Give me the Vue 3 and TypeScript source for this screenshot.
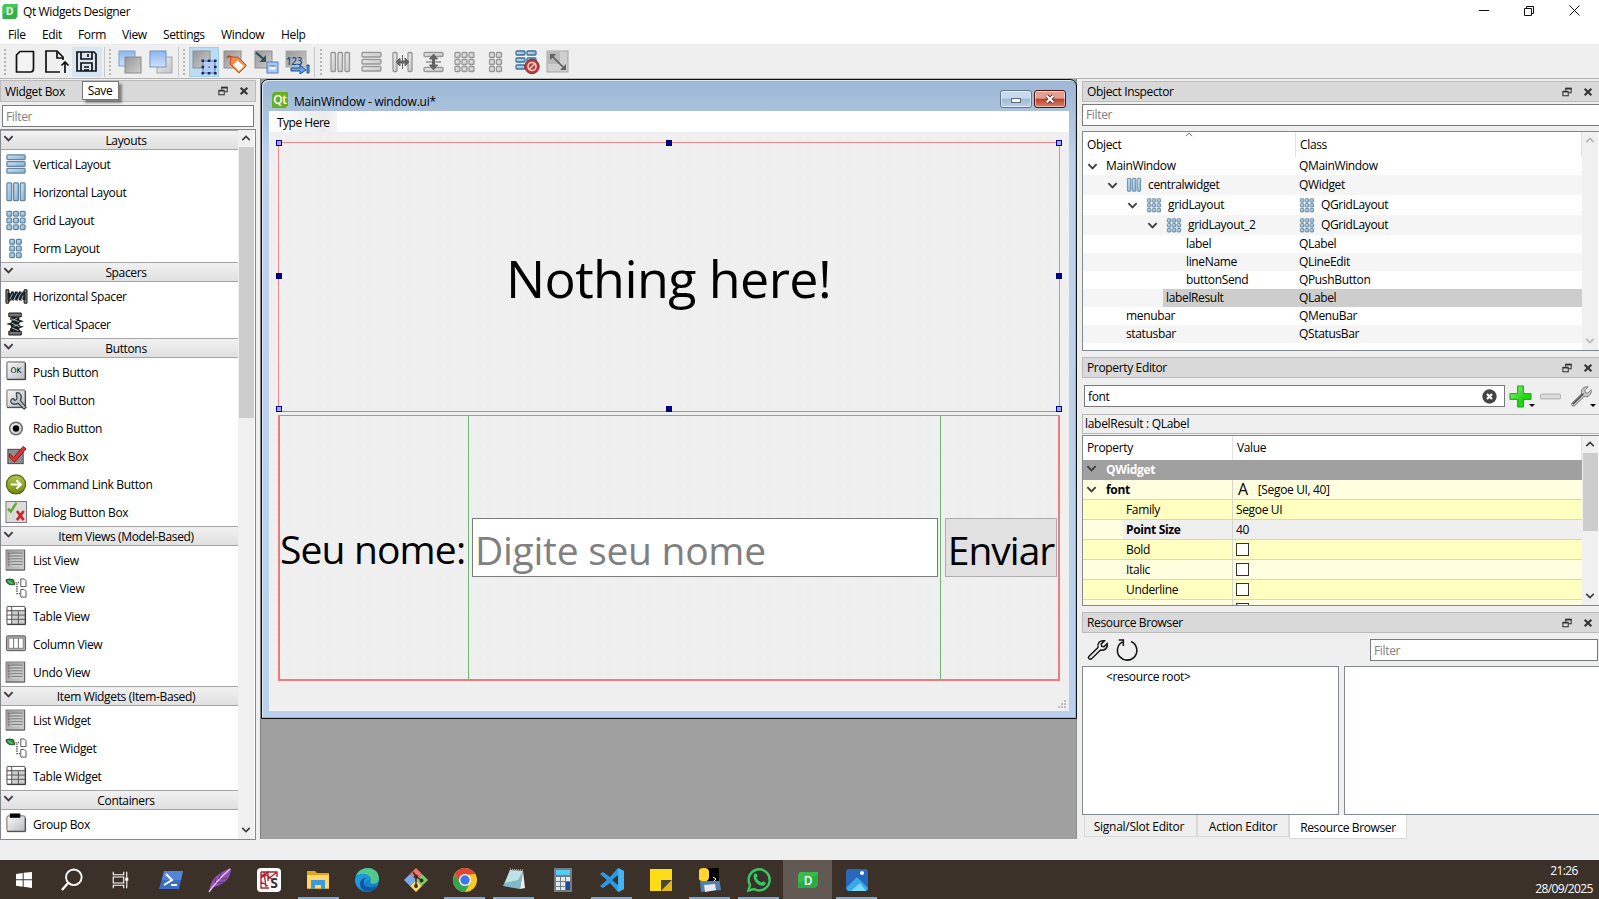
<script setup lang="ts">
interface Tool { icon: string; state?: string }
interface Category { title: string; items: { icon: string; label: string }[] }
interface TreeRow { name: string; cls: string; depth: number; open?: boolean; icon?: string; clsIcon?: string; selected?: boolean }
interface PropRow { name: string; value?: string; check?: boolean; current?: boolean }
interface TaskItem { icon: string; running?: boolean; active?: boolean }

const bar = (x: number, y: number, w: number, h: number, f = 'url(#gBlue)', s = '#64859f') =>
  `<rect x="${x}" y="${y}" width="${w}" height="${h}" rx="1" fill="${f}" stroke="${s}" stroke-width="1.300"/>`
const grey = ['url(#gGrey)', '#979797'] as const
const deep = ['url(#gBlue)', '#3c7099'] as const
const grid = (cols: number, ox: number, f?: string, s?: string) => {
  let out = ''
  for (let r = 0; r < 3; r++) for (let c = 0; c < cols; c++) out += bar(ox + c * 7, 2.5 + r * 7, 5, 5, f, s)
  return out
}
const sheet = '<rect x="1" y="1" width="19.500" height="21" fill="url(#gSteel)" stroke="#8b8b8b"/><path d="M1 22h19.500V1" fill="none" stroke="#5c5c5c"/><path d="M3 4.500h2M3 7.500h2M3 10.500h2M3 13.500h2M3 16.500h2" stroke="#555"/><path d="M7 4.500h11M7 7.500h11M7 10.500h11M7 13.500h11M7 16.500h11" stroke="#666" stroke-width="1"/><path d="M7 5.500h11M7 8.500h11M7 11.500h11M7 14.500h11M7 17.500h11" stroke="#dcdcdc"/>'
const wrench = 'M2 19 12 9.300C11 5 14 1 19 2l-3.500 3.500 .5 2.500 2.500.5L22 5c1 5-3 8-7.300 7L5 21.500C3 23 .5 21 2 19z'
const block = '<rect x="1" y="1" width="17" height="17" fill="url(#gSteel)" stroke="#8f8f8f"/>'

const icons: Record<string, string> = {
  qt: '<path d="M3 0h21v20l-3 4H0V4z" fill="#2fb247"/><path d="M3 0h21v4L0 17V4z" fill="#48c65b"/><text x="11.500" y="18" text-anchor="middle" font-size="17" font-weight="700" fill="#eafbe9" font-family="Open Sans,sans-serif">D</text>',
  qtForm: '<path d="M3 0h21v20l-4 4H0V4z" fill="#6aaf20"/><text x="12" y="18" text-anchor="middle" font-size="18" font-weight="600" fill="#fff" font-family="Open Sans,sans-serif">Qt</text>',
  new: '<path d="M7 1.500h13.500v17q0 3.500-3 3.500H3.500V5z" fill="#fff" fill-opacity=".3" stroke="#111" stroke-width="1.700" stroke-linejoin="round"/>',
  open: '<path d="M16 22H2V1h11l6 6v3M13 1v7h6M21 23V12M17.500 15.500 21 12l3.500 3.500" fill="none" stroke="#111" stroke-width="1.700"/>',
  save: '<path d="M2 2h17l2 2v17H2zM6 2v7h11V2M13 4v3M6 21v-8h11v8M9 17h5M9 20h5" fill="none" stroke="#111" stroke-width="1.700"/>',
  back: '<rect x="1" y="1" width="16" height="15" fill="url(#gSky)" stroke="#7f9fca"/><rect x="7" y="7" width="16" height="16" fill="url(#gSteel)" stroke="#8b8b8b"/>',
  front: '<rect x="8" y="7" width="15" height="16" fill="url(#gGrey)" stroke="#a7a7a7"/><rect x="1" y="1" width="16" height="16" fill="url(#gSky)" stroke="#7291bd"/>',
  widgets: block + '<rect x="11" y="11" width="12" height="12" fill="#b4cdf2" stroke="#4d7fc4"/><path d="M9.500 9.500h2.600v2.600H9.500zM15.700 9.500h2.600v2.600h-2.600zM22 9.500h2.600v2.600H22zM9.500 15.700h2.600v2.600H9.500zM22 15.700h2.600v2.600H22zM9.500 22h2.600v2.600H9.500zM15.700 22h2.600v2.600h-2.600zM22 22h2.600v2.600H22z" fill="#152e57"/><path d="M16.500 16.500h1.200v1.200h-1.200z" fill="#152e57"/>',
  signals: block + '<path d="M4 8Q6 4 11 9" fill="none" stroke="#c8370a" stroke-width="1.600"/><path d="M8 7h7l8.500 8.500L16 23 7 14z" fill="#ef8a4a" stroke="#cc4d12"/><path d="M14.500 10.500l6.500 5.500-5 5-6-6z" fill="#fff"/>',
  buddy: block + '<rect x="13" y="12" width="11" height="11" fill="#a9c8f4" stroke="#4e7fc2"/><path d="M15.500 18h6" stroke="#fff" stroke-width="3"/><path d="M15.500 16h6" stroke="#4472b6"/><path d="M2 2.500l8 7" stroke="#2e4d5f" stroke-width="2.200"/><path d="M12 5v7H5.500z" fill="#2e4d5f"/>',
  tabs: '<rect x="1" y="1" width="20" height="16" fill="url(#gSteel)" stroke="#aaa"/><text x="1" y="14.500" font-size="10" font-weight="600" fill="#174b8d" font-family="Open Sans,sans-serif">123</text><path d="M6 18h9v-3l6 5-6 4v-3H6zM22 15h2v8h-2z" fill="#6da1e0" stroke="#164f96"/>',
  gH: bar(2, 2.500, 4.500, 19, ...grey) + bar(9, 2.500, 4.500, 19, ...grey) + bar(16, 2.500, 4.500, 19, ...grey),
  gV: bar(2, 2.500, 19, 4.500, ...grey) + bar(2, 9.500, 19, 4.500, ...grey) + bar(2, 16.500, 19, 4.500, ...grey),
  gSH: bar(2, 2.500, 4, 19, ...grey) + bar(17, 2.500, 4, 19, ...grey) + '<path d="M5 12l4-4v3h5V8l4 4-4 4v-3H9v3zM11.500 5v14" fill="#646464" stroke="#646464"/>',
  gSV: bar(2, 2.500, 19, 4, ...grey) + bar(2, 17.500, 19, 4, ...grey) + '<path d="M11.500 4l4 5h-3v6h3l-4 5-4-5h3V9h-3zM4 12h15" fill="#646464" stroke="#646464"/>',
  gGrid: grid(3, 2, ...grey),
  gForm: grid(2, 5.500, ...grey),
  break: bar(1, 1, 9, 4, ...deep) + bar(12, 1, 9, 4, ...deep) + bar(1, 8, 9, 4, ...deep) + bar(12, 8, 9, 4, ...deep) + bar(1, 15, 9, 4, ...deep) + '<circle cx="17" cy="16.500" r="7.200" fill="#bd3a36" stroke="#8f2422"/><circle cx="17" cy="16.500" r="4" fill="none" stroke="#ead0cf" stroke-width="1.600"/><path d="M14 19.500l6-6" stroke="#ead0cf" stroke-width="1.600"/>',
  adjust: '<rect x="1" y="1" width="21" height="21" fill="#cfcfcf" stroke="#a5a5a5"/><rect x="2" y="2" width="12" height="12" fill="#b9b9b9"/><path d="M5 5l14 14" fill="none" stroke="#606060" stroke-width="1.700"/><path d="M4 4h6l-6 6zM20 20h-6l6-6z" fill="#606060"/>',
  h: bar(2, 2, 5, 18.500) + bar(9, 2, 5, 18.500) + bar(16, 2, 5, 18.500),
  v: bar(2, 2, 19, 5) + bar(2, 9, 19, 5) + bar(2, 16, 19, 5),
  grid: grid(3, 2),
  form: grid(2, 5),
  hSpacer: '<path d="M1 5h3v14H1zM20 5h3v14h-3z" fill="#888" stroke="#111"/><path d="M4 17L8 7v9l4-9v9l4-9v9l4-9v9M4 8v8" fill="none" stroke="#1b1f22" stroke-width="2.800"/><path d="M5 15l3-6M9 16l3.500-7M13 16l3.500-7M17 16l2-5" stroke="#a8bac0"/>',
  vSpacer: '<path d="M4 0h13v4H4zM4 19h13v4H4z" fill="#777" stroke="#111"/><path d="M7 4h8v15H6z" fill="#1b1f22"/><path d="M5.500 5.500l10 3-10 3 10 3-10 3 10 1.500" fill="none" stroke="#1b1f22" stroke-width="2.500"/><path d="M6.500 6l8 3M7 10.500l8 4M7 15.500l7 3M13 5l-5 3M14 12l-5 2" stroke="#a8bac0"/>',
  push: '<rect x="2" y="1" width="19" height="18" rx="1" fill="url(#gLight)" stroke="#555"/><path d="M2 19.500h19.500V2" fill="none" stroke="#333"/><text x="11.500" y="13" text-anchor="middle" font-size="8" fill="#000" letter-spacing="0" font-family="DejaVu Sans,sans-serif">OK</text>',
  tool: '<rect x="2" y="1" width="19" height="18" rx="1" fill="url(#gLight)" stroke="#666"/><path d="M2 19.500h19.500V2" fill="none" stroke="#444"/><path d="M7 15c-2-2-1-5 2-5l1 2 2-1c2-2-1-4 0-7 3-1 7 3 4 8l6 7-2 2-6-6c-2 1-5 1-7 0z" fill="#c2c7ca" stroke="#3d464b" stroke-width="1.300"/>',
  radio: '<circle cx="11.500" cy="12" r="6.600" fill="url(#gLight)" stroke="#666" stroke-width="1.500"/><circle cx="11.500" cy="12" r="3.300" fill="#000"/>',
  check: '<rect x="3" y="4.500" width="16" height="15" fill="#8d8d8d" stroke="#444"/><path d="M5 9l4 4L19 1.500l3 2.500L10 18l-6-6z" fill="#d93438" stroke="#8c1519"/>',
  command: '<circle cx="11.500" cy="12" r="10" fill="url(#gOlive)" stroke="#4e6207" stroke-width="1.200"/><path d="M6 12h10M12 7.500l4.500 4.500-4.500 4.500" fill="none" stroke="#fff" stroke-width="2.300"/>',
  dialog: '<rect x="1" y=".5" width="21.500" height="22" fill="#dcdcdc" stroke="#777"/><path d="M3 8l3 3 6-9" fill="none" stroke="#66a832" stroke-width="2.500"/><path d="M12.500 10.500l7 9.500M19.500 10.500l-7 9.500" stroke="#cc2630" stroke-width="2.800"/>',
  list: sheet,
  tree: '<path d="M1 3l4-1 4 1 1 5-5 0-3-2z" fill="#2f9139" stroke="#184f1d"/><path d="M3 4l5 3" stroke="#9ed6a2"/><path d="M11 6h5M12.500 7v10M12 17.500h4" stroke="#111" stroke-width="1.200" stroke-dasharray="1.200 1.200" fill="none"/><path d="M16.500 2h3.500l2 2v6h-5.500zM16.500 13h3.500l2 2v6h-5.500z" fill="#fff" stroke="#555"/>',
  table: '<rect x="2" y="1.500" width="19" height="18.500" rx="1" fill="#cfcfcf" stroke="#555"/><path d="M3 2h17v3H3zM3 7h3.500v12H3z" fill="#fff"/><path d="M2 6h19M2 10.500h19M2 15h19M7 2v18M14 6v14" stroke="#555"/><path d="M2 20.500h19.500V3" fill="none" stroke="#333"/>',
  column: '<rect x="1.500" y="3" width="20" height="15.500" rx="1.500" fill="#aaa" stroke="#555"/><path d="M4 5.500h5v10.500H4zM9 5.500h5v10.500H9zM14 5.500h5v10.500h-5z" fill="#fff" stroke="#777" stroke-width=".8"/>',
  group: '<rect x="2" y="3" width="19" height="16" rx="1.500" fill="url(#gLight)" stroke="#666"/><path d="M2 19.500h19.500V5" fill="none" stroke="#444"/><path d="M5 .5h11v4.500H5z" fill="#000"/>',
  plus: '<path d="M9 1h6v8h8v6h-8v8H9v-8H1V9h8z" fill="url(#gGreen)" stroke="#17a010"/>',
  minus: '<rect x="1.500" y="9.500" width="21" height="5" rx="1" fill="#dcdcdc" stroke="#adadad"/>',
  wrench: `<path d="${wrench}" fill="#c7c7c7" stroke="#777"/><path d="M3 20L14 9" stroke="#555" stroke-width="1.700"/>`,
  wrenchLine: `<path d="${wrench}" fill="none" stroke="#151515" stroke-width="1.600"/>`,
  reload: '<path d="M7 3.200A10.600 10.600 0 1 0 16.500 2.800M3 1h5v6.500" fill="none" stroke="#151515" stroke-width="1.700"/>',
  clear: '<circle cx="12" cy="12" r="11.500" fill="#444"/><path d="M8 8l8 8M16 8l-8 8" stroke="#fff" stroke-width="3.500"/>',
  chevron: '<path d="M3 7l9 9 9-9" fill="none" stroke="#3c3c3c" stroke-width="4"/>',
  float: '<path d="M9 9V3h13v11h-6" fill="none" stroke="#333" stroke-width="2.500"/><path d="M8 4h15" stroke="#333" stroke-width="4"/><rect x="2" y="11" width="13" height="10" fill="none" stroke="#333" stroke-width="2.500"/><path d="M2 11h13" stroke="#333" stroke-width="4"/>',
  close: '<path d="M4 4l16 16M20 4L4 20" stroke="#333" stroke-width="5"/>',
  windows: '<path d="M0 3l10-1.500V11H0zM11.500 1.300L24 0v11H11.500zM0 12.500h10V22L0 20.500zM11.500 12.500H24V24l-12.500-1.700z" fill="#fff"/>',
  search: '<circle cx="14" cy="9" r="8.500" fill="none" stroke="#fff" stroke-width="2"/><path d="M8 15L1 23" stroke="#fff" stroke-width="2.500"/>',
  task: '<path d="M3 1v4h14V1M3 23v-4h14v4M3 8h14v8H3zM21 1v22" fill="none" stroke="#fff" stroke-width="1.500"/><path d="M19 9h4v4h-4z" fill="#fff"/>',
  powershell: '<path d="M5 3h19l-4 18H0z" fill="#3c6dc5"/><path d="M5 3h19l-2 9H3z" fill="#5485d8"/><path d="M7 6l6 6-8 5M12 17h6" fill="none" stroke="#fff" stroke-width="2"/>',
  feather: '<path d="M1 24C2 11 10 5 23 0c0 9-5 16-17 19z" fill="#8f52b2"/><path d="M1 24C7 15 13 9 22 1" stroke="#e2bdf2" stroke-width="1.500" fill="none"/><path d="M7 15l1-5M11 11l2-6M9 15l7-1M13 11l6-1" stroke="#64328c"/>',
  red: '<rect width="24" height="24" rx="4" fill="#fff"/><path d="M4 4h16v5M4 4v16h8M4 10l7-6v9M4 14l7 4M11 11l8-6M4 7h5l6 4M7 4l2 15" fill="none" stroke="#b02331" stroke-width="1.400"/><text x="17" y="20" text-anchor="middle" font-size="14" font-weight="700" fill="#333" font-family="Open Sans,sans-serif">S</text>',
  folder: '<path d="M1 3h8l2 2h12v16H1z" fill="#e0a322"/><path d="M1 7h22v13H1z" fill="#ffd866"/><path d="M5 12h14v9h-4v-4H9v4H5z" fill="#3d9bdc"/>',
  edge: '<circle cx="12" cy="12" r="12" fill="#1683cf"/><path d="M1 8C5-3 23-3 24 10c0 5-5 7-9 5 4-7-6-12-14-7z" fill="#52c98a"/><path d="M0 12C3 4 14 5 15 12c-5-2-8 5-1 9-6 3-13-1-14-9z" fill="#1b9ce0"/><path d="M9 13c-1 6 6 8 13 5-4 8-17 7-17-2 0-4 4-7 8-6-2 0-4 1-4 3z" fill="#1456a2"/>',
  git: '<path d="M12 0l6 6-6 6-6-6z" fill="#ee746d"/><path d="M6 6l6 6-6 6-6-6z" fill="#79aaf1"/><path d="M18 6l6 6-6 6-6-6z" fill="#79cc68"/><path d="M12 12l6 6-6 6-6-6z" fill="#f5da74"/><path d="M9 4l3 4v10M12 8l6 5" stroke="#3b3027" stroke-width="1.500" fill="none"/><circle cx="12" cy="18" r="1.900" fill="#33291f"/><circle cx="12" cy="8.500" r="1.900" fill="#33291f"/><circle cx="17.500" cy="12.500" r="1.900" fill="#33291f"/>',
  chrome: '<circle cx="12" cy="12" r="12" fill="#f9c825"/><path d="M1.600 6A12 12 0 0 1 22.400 6L12 7 7 14.500z" fill="#e24437"/><path d="M1.600 6A12 12 0 0 0 12 24l5-9-5 2-5-2.500z" fill="#36a352"/><circle cx="12" cy="12" r="6" fill="#fff"/><circle cx="12" cy="12" r="4.700" fill="#3978e6"/>',
  notepad: '<path d="M8 2l13 1-3 18-17-3z" fill="#7fbac6"/><path d="M8 2l13 1-5 9L3 15z" fill="#bfe2e6"/><path d="M21 3l2 17-5 1z" fill="#eee"/><path d="M8 1.500l13 1" stroke="#aaa" stroke-width="2" stroke-dasharray="1 1"/>',
  calc: '<rect x="3" width="18" height="24" fill="#737c85"/><path d="M5 2h14v5H5z" fill="#55cdf2"/><path d="M5 9h4v4H5zM10 9h4v4h-4zM15 9h4v4h-4zM5 14h4v4H5zM10 14h4v4h-4zM5 19h4v3H5zM10 19h4v3h-4z" fill="#e5e8eb"/><path d="M15 14h4v8h-4z" fill="#174d91"/>',
  code: '<path d="M18 0l6 3v18l-6 3-8-9-7 5-3-2 7-6-7-6 3-2 7 5zM18 7l-6 5 6 5z" fill="#2b9ae5" fill-rule="evenodd"/><path d="M18 0l6 3v18l-6 3z" fill="#45b4f5"/>',
  note: '<path d="M1 1h22v11L12 23H1z" fill="#ffdd16"/><path d="M12 12h11L12 23z" fill="#4b4737"/><path d="M23 12v11H12z" fill="#e6b71d"/>',
  python: '<path d="M2 13l19-3 2 12-20 2z" fill="#507fb0"/><path d="M6 17l11-1 1 6-11 2z" fill="#e8e8e8"/><path d="M9 0h12v13H9z" fill="#000"/><path d="M15 9l3 2-2 2" fill="none" stroke="#fff"/><path d="M1 3q0-3 5-3t5 4v5q0 5-6 4Q0 13 1 9z" fill="#ffd52f"/>',
  whatsapp: '<path d="M1.500 22.500L3 17A10.500 10.500 0 1 1 7 21z" fill="#3b3027" stroke="#35c965" stroke-width="2.400"/><path d="M7 6c2-2 3 0 3.500 2 .5 1-1 1-1 2 1 2 3 4 5 4.500 1 0 1-1.500 2-1s3 1 2 2.500c-2 3-5 1.500-7 .5-3-2-6-6-4.500-10.500z" fill="#35c965"/>',
  designer: '<path d="M4 4h18v13l-3 3H2V7z" fill="#28ad42"/><path d="M4 4h18v3L2 15V7z" fill="#38ba4c"/><text x="12" y="16.500" text-anchor="middle" font-size="12" font-weight="600" fill="#fff" font-family="Open Sans,sans-serif">D</text>',
  photos: '<rect x="1" y="1" width="22" height="22" rx="3" fill="#2767bd"/><path d="M1 20L12 9l11 11v1l-2 2H3z" fill="#38a9e6"/><path d="M6 23l9-8 6 8z" fill="#7bd7f7"/><circle cx="17" cy="5" r="2" fill="#fff"/>'
}

const menus = ['File', 'Edit', 'Form', 'View', 'Settings', 'Window', 'Help']
const toolGroups: Tool[][] = [
  [{ icon: 'new' }, { icon: 'open' }, { icon: 'save', state: 'hover' }],
  [{ icon: 'back' }, { icon: 'front' }],
  [{ icon: 'widgets', state: 'checked' }, { icon: 'signals' }, { icon: 'buddy' }, { icon: 'tabs' }],
  ['gH', 'gV', 'gSH', 'gSV', 'gGrid', 'gForm', 'break', 'adjust'].map(icon => ({ icon }))
]
const categories: Category[] = [
  { title: 'Layouts', items: [{ icon: 'v', label: 'Vertical Layout' }, { icon: 'h', label: 'Horizontal Layout' }, { icon: 'grid', label: 'Grid Layout' }, { icon: 'form', label: 'Form Layout' }] },
  { title: 'Spacers', items: [{ icon: 'hSpacer', label: 'Horizontal Spacer' }, { icon: 'vSpacer', label: 'Vertical Spacer' }] },
  { title: 'Buttons', items: [{ icon: 'push', label: 'Push Button' }, { icon: 'tool', label: 'Tool Button' }, { icon: 'radio', label: 'Radio Button' }, { icon: 'check', label: 'Check Box' }, { icon: 'command', label: 'Command Link Button' }, { icon: 'dialog', label: 'Dialog Button Box' }] },
  { title: 'Item Views (Model-Based)', items: [{ icon: 'list', label: 'List View' }, { icon: 'tree', label: 'Tree View' }, { icon: 'table', label: 'Table View' }, { icon: 'column', label: 'Column View' }, { icon: 'list', label: 'Undo View' }] },
  { title: 'Item Widgets (Item-Based)', items: [{ icon: 'list', label: 'List Widget' }, { icon: 'tree', label: 'Tree Widget' }, { icon: 'table', label: 'Table Widget' }] },
  { title: 'Containers', items: [{ icon: 'group', label: 'Group Box' }] }
]
const objects: TreeRow[] = [
  { name: 'MainWindow', cls: 'QMainWindow', depth: 0, open: true },
  { name: 'centralwidget', cls: 'QWidget', depth: 1, open: true, icon: 'h' },
  { name: 'gridLayout', cls: 'QGridLayout', depth: 2, open: true, icon: 'grid', clsIcon: 'grid' },
  { name: 'gridLayout_2', cls: 'QGridLayout', depth: 3, open: true, icon: 'grid', clsIcon: 'grid' },
  { name: 'label', cls: 'QLabel', depth: 4 },
  { name: 'lineName', cls: 'QLineEdit', depth: 4 },
  { name: 'buttonSend', cls: 'QPushButton', depth: 4 },
  { name: 'labelResult', cls: 'QLabel', depth: 3, selected: true },
  { name: 'menubar', cls: 'QMenuBar', depth: 1 },
  { name: 'statusbar', cls: 'QStatusBar', depth: 1 }
]
const props: PropRow[] = [
  { name: 'Family', value: 'Segoe UI' },
  { name: 'Point Size', value: '40', current: true },
  { name: 'Bold', check: true },
  { name: 'Italic', check: true },
  { name: 'Underline', check: true },
  { name: '', check: true }
]
const tasks: TaskItem[] = [
  { icon: 'windows' }, { icon: 'search' }, { icon: 'task' }, { icon: 'powershell' }, { icon: 'feather' }, { icon: 'red' },
  { icon: 'folder', running: true }, { icon: 'edge' }, { icon: 'git' }, { icon: 'chrome', running: true }, { icon: 'notepad', running: true },
  { icon: 'calc' }, { icon: 'code', running: true }, { icon: 'note' }, { icon: 'python', running: true }, { icon: 'whatsapp', running: true },
  { icon: 'designer', active: true }, { icon: 'photos', running: true }
]
const handles = ['nw', 'n', 'ne', 'w', 'e', 'sw', 's', 'se']
</script>

<template>
  <div class="screen">
    <svg class="defs" width="0" height="0">
      <defs>
        <linearGradient id="gBlue" x1="0" y1="0" x2="1" y2="1"><stop offset="0" stop-color="#d0e7f7" /><stop offset="1" stop-color="#7fadd1" /></linearGradient>
        <linearGradient id="gGrey" x1="0" y1="0" x2="1" y2="1"><stop offset="0" stop-color="#f0f0f0" /><stop offset="1" stop-color="#c4c4c4" /></linearGradient>
        <linearGradient id="gLight" x1="0" y1="0" x2="1" y2="1"><stop offset="0" stop-color="#fafafa" /><stop offset="1" stop-color="#b9bcc0" /></linearGradient>
        <linearGradient id="gSteel" x1="0" y1="0" x2="1" y2="1"><stop offset="0" stop-color="#969696" /><stop offset="1" stop-color="#cfcfcf" /></linearGradient>
        <linearGradient id="gSky" x1="0" y1="0" x2="0" y2="1"><stop offset="0" stop-color="#8db5f0" /><stop offset="1" stop-color="#cfe1fb" /></linearGradient>
        <linearGradient id="gOlive" x1="0" y1="0" x2="0" y2="1"><stop offset="0" stop-color="#b3c653" /><stop offset="1" stop-color="#6d8a0a" /></linearGradient>
        <linearGradient id="gGreen" x1="0" y1="0" x2="1" y2="1"><stop offset="0" stop-color="#9df295" /><stop offset=".6" stop-color="#1fd80e" /></linearGradient>
      </defs>
    </svg>

    <header class="titlebar">
      <svg class="app-icon" viewBox="0 0 24 24" v-html="icons.qt" />
      <span class="app-name">Qt Widgets Designer</span>
      <svg class="win-controls" viewBox="0 0 120 24">
        <path d="M5 10.500h10M50.500 8.500h7v7h-7zM52.500 8.500v-2h7v7h-2M95.500 5.500l10 10M105.500 5.500l-10 10" fill="none" stroke="#111" />
      </svg>
    </header>
    <nav class="menubar"><span v-for="m in menus" :key="m" :class="'m-' + m.toLowerCase()">{{ m }}</span></nav>

    <div class="toolbar">
      <div v-for="(group, gi) in toolGroups" :key="gi" :class="['tool-group', 'g' + gi]">
        <i class="grip" />
        <span v-for="t in group" :key="t.icon" :class="['tool', t.state]"><svg viewBox="0 0 25 25" v-html="icons[t.icon]" /></span>
      </div>
    </div>
    <div class="tooltip">Save</div>

    <main class="workspace">
      <aside class="widget-box">
        <div class="dock-title"><span>Widget Box</span><svg viewBox="0 0 24 24" v-html="icons.float" /><svg viewBox="0 0 24 24" v-html="icons.close" /></div>
        <div class="field wb-filter">Filter</div>
        <div class="wb-list">
          <div class="wb-content">
            <section v-for="c in categories" :key="c.title">
              <h3><svg viewBox="0 0 24 24" v-html="icons.chevron" /><span>{{ c.title }}</span></h3>
              <div v-for="it in c.items" :key="it.label" class="wb-item"><svg viewBox="0 0 23 23" v-html="icons[it.icon]" /><span>{{ it.label }}</span></div>
            </section>
          </div>
          <div class="scroll">
            <svg class="up" viewBox="0 0 24 24" v-html="icons.chevron" /><i class="thumb wb-thumb" /><svg class="down" viewBox="0 0 24 24" v-html="icons.chevron" />
          </div>
        </div>
      </aside>

      <div class="mdi">
        <div class="subwindow">
          <div class="sub-title">
            <svg class="sub-icon" viewBox="0 0 24 24" v-html="icons.qtForm" />
            <span>MainWindow - window.ui*</span>
            <div class="sub-btn"><i class="min-glyph" /></div>
            <div class="sub-btn red"><svg viewBox="0 0 14 12"><path d="M3 2l8 8M11 2l-8 8" stroke="#5a2a2a" stroke-width="4.500" /><path d="M3 2l8 8M11 2l-8 8" stroke="#fff" stroke-width="2.600" /></svg></div>
          </div>
          <div class="form">
            <div class="form-menu"><span>Type Here</span></div>
            <div class="central">
              <div class="result">
                <span>Nothing here!</span>
                <i v-for="h in handles" :key="h" :class="['handle', h]" />
              </div>
              <div class="grid-row">
                <div class="cell name-label"><span>Seu nome:</span></div>
                <div class="cell name-edit"><div class="line-edit"><span>Digite seu nome</span></div></div>
                <div class="cell send"><div class="push"><span>Enviar</span></div></div>
              </div>
            </div>
            <svg class="size-grip" viewBox="0 0 9 9"><path d="M6 0h2v2H6zM3 3h2v2H3zM6 3h2v2H6zM0 6h2v2H0zM3 6h2v2H3zM6 6h2v2H6z" fill="#bdbdbd" /></svg>
          </div>
        </div>
      </div>

      <aside class="right">
        <section class="inspector">
          <div class="dock-title"><span>Object Inspector</span><svg viewBox="0 0 24 24" v-html="icons.float" /><svg viewBox="0 0 24 24" v-html="icons.close" /></div>
          <div class="field oi-filter">Filter</div>
          <div class="table oi-table">
            <div class="table-body">
              <div class="head"><span class="c1">Object<svg class="sort" viewBox="0 0 10 6"><path d="M1 5l4-4 4 4" fill="none" stroke="#555" /></svg></span><span class="c2">Class</span></div>
              <div v-for="(o, i) in objects" :key="o.name" :class="['orow', { alt: i % 2, tall: o.icon, selected: o.selected }]">
                <div :class="['c1', 'd' + o.depth]">
                  <svg v-if="o.open" class="chev" viewBox="0 0 24 24" v-html="icons.chevron" />
                  <svg v-if="o.icon" class="mini" viewBox="0 0 23 23" v-html="icons[o.icon]" />
                  <span class="oname">{{ o.name }}</span>
                </div>
                <div class="c2"><svg v-if="o.clsIcon" class="mini" viewBox="0 0 23 23" v-html="icons[o.clsIcon]" /><span>{{ o.cls }}</span></div>
              </div>
            </div>
            <div class="scroll faint"><svg class="up" viewBox="0 0 24 24" v-html="icons.chevron" /><svg class="down" viewBox="0 0 24 24" v-html="icons.chevron" /></div>
          </div>
        </section>

        <section class="props">
          <div class="dock-title"><span>Property Editor</span><svg viewBox="0 0 24 24" v-html="icons.float" /><svg viewBox="0 0 24 24" v-html="icons.close" /></div>
          <div class="prop-tools">
            <div class="field"><span>font</span><svg viewBox="0 0 24 24" v-html="icons.clear" /></div>
            <svg class="pt" viewBox="0 0 24 24" v-html="icons.plus" /><i class="arrow" />
            <svg class="pt" viewBox="0 0 24 24" v-html="icons.minus" />
            <svg class="pt" viewBox="0 0 24 24" v-html="icons.wrench" /><i class="arrow" />
          </div>
          <div class="prop-object">labelResult : QLabel</div>
          <div class="table p-table">
            <div class="table-body">
              <div class="head"><span class="c1">Property</span><span class="c2">Value</span></div>
              <div class="prow group"><svg class="chev" viewBox="0 0 24 24" v-html="icons.chevron" /><b>QWidget</b></div>
              <div class="prow font-row"><div class="c1"><svg class="chev" viewBox="0 0 24 24" v-html="icons.chevron" /><b>font</b></div><div class="c2"><span class="a">A</span><span>[Segoe UI, 40]</span></div></div>
              <div v-for="(p, i) in props" :key="i" :class="['prow', { dark: i % 2 === 0, current: p.current }]">
                <div class="c1"><span>{{ p.name }}</span></div>
                <div class="c2"><i v-if="p.check" class="box" /><span v-else>{{ p.value }}</span></div>
              </div>
            </div>
            <div class="scroll"><svg class="up" viewBox="0 0 24 24" v-html="icons.chevron" /><i class="thumb p-thumb" /><svg class="down" viewBox="0 0 24 24" v-html="icons.chevron" /></div>
          </div>
        </section>

        <section class="resources">
          <div class="dock-title"><span>Resource Browser</span><svg viewBox="0 0 24 24" v-html="icons.float" /><svg viewBox="0 0 24 24" v-html="icons.close" /></div>
          <div class="res-tools"><svg viewBox="0 0 24 24" v-html="icons.wrenchLine" /><svg viewBox="0 0 24 24" v-html="icons.reload" /><div class="field">Filter</div></div>
          <div class="res-panes"><div class="pane left">&lt;resource root&gt;</div><div class="pane" /></div>
          <div class="tabs"><span class="t1">Signal/Slot Editor</span><span class="t2">Action Editor</span><span class="t3">Resource Browser</span></div>
        </section>
      </aside>
    </main>

    <footer class="taskbar">
      <div v-for="t in tasks" :key="t.icon" :class="['slot', 's-' + t.icon, { running: t.running, active: t.active }]"><svg viewBox="0 0 24 24" v-html="icons[t.icon]" /></div>
      <div class="clock"><span>21:26</span><span>28/09/2025</span></div>
    </footer>
  </div>
</template>

<style>
body { margin: 0; overflow: hidden; }
</style>

<style scoped>
* { box-sizing: border-box; }
.screen { position: relative; width: 1599px; height: 899px; display: flex; flex-direction: column; overflow: hidden; background: #efefef; font: 12px "Open Sans", "Noto Sans", sans-serif; letter-spacing: -.35px; color: #000; white-space: nowrap; }
svg { display: block; flex: none; overflow: visible; }
i { display: block; }
.defs { position: absolute; }
.titlebar { height: 24px; background: #fff; display: flex; align-items: center; padding-left: 2px; }
.app-icon { width: 16px; height: 15px; margin-top: -2px; }
.app-name { margin: -1px 0 0 5px; flex: 1; letter-spacing: -.37px; }
.win-controls { width: 120px; height: 24px; margin-right: 5px; }
.menubar { height: 21px; background: #fff; border-bottom: 1px solid #ececec; display: flex; padding-left: 8px; line-height: 21px; }
.m-file { width: 34px; } .m-edit { width: 36px; } .m-form { width: 44px; } .m-view { width: 41px; } .m-settings { width: 58px; } .m-window { width: 60px; }
.toolbar { height: 34px; display: flex; padding-top: 2px; border-bottom: 1px solid #b4b4b4; }
.tool-group { display: flex; height: 30px; border-right: 1px solid #c6c6c6; }
.g0 { width: 105px; } .g1 { width: 74px; } .g2 { width: 136px; } .g3 { border: 0; padding-left: 1px; }
.grip { width: 3px; height: 26px; margin: 2px 3px 0 4px; background: radial-gradient(circle at 1px 1px, #b5b5b5 1px, transparent 1.3px) 0 0 / 3px 4px; }
.tool { width: 30px; height: 30px; margin-right: 1px; display: grid; place-items: center; padding: 1px 0 0 1px; }
.tool svg { width: 25px; height: 25px; }
.tool.hover { background: #d8e6f2; }
.tool.checked { background: #bcdcf4; box-shadow: inset 0 0 0 1px #a5cdec; }
.tooltip { position: absolute; left: 82px; top: 81px; width: 37px; height: 19px; line-height: 18px; padding-right: 1px; text-align: center; background: #fff; border: 1px solid #767676; box-shadow: 3px 3px 2px rgba(0,0,0,.4); z-index: 5; }
.workspace { flex: 1; display: flex; }
.dock-title { height: 21px; border: 1px solid #bbb; background: #d9d9d9; display: flex; align-items: center; padding: 0 6px 0 4px; }
.dock-title span { flex: 1; }
.dock-title svg { width: 10px; height: 10px; margin-left: 11px; }
.field { height: 22px; border: 1px solid #7a7a7a; background: #fff; color: #808080; line-height: 21px; padding-left: 3px; }
.widget-box { width: 256px; padding-top: 2px; }
.widget-box .dock-title { margin-top: -1px; height: 22px; }
.wb-filter { margin: 3px 2px 0; line-height: 22px; }
.wb-list { margin-top: 2px; height: 711px; border: 1px solid #828790; background: #fff; display: flex; }
.wb-content { width: 237px; }
h3 { margin: 0; height: 20px; border: solid #a5a5a5; border-width: 1px 0; background: linear-gradient(#f1f1f1, #e0e0e0); font: inherit; display: flex; padding-left: 2px; }
h3 svg { width: 11px; height: 11px; margin-top: 2px; }
h3 span { flex: 1; text-align: center; line-height: 19px; }
.wb-item { height: 28px; display: flex; align-items: center; padding-left: 4px; }
.wb-item svg { width: 22px; height: 22px; }
.wb-item span { margin-left: 6px; line-height: 28px; padding-top: 1px; letter-spacing: -.33px; }
.scroll { width: 16px; background: #f0f0f0; display: flex; flex-direction: column; align-items: center; }
.scroll svg { width: 10px; height: 10px; }
.up { transform: rotate(180deg); margin: 3px 0 4px; }
.down { margin: auto 0 4px; }
.thumb { width: 15px; background: #cdcdcd; }
.wb-thumb { height: 271px; }
.faint svg { opacity: .3; }
.mdi { width: 817px; margin-left: 4px; height: 760px; background: #a0a0a0; border-left: 1px solid #838383; border-right: 1px solid #8c8c8c; }
.subwindow { width: 816px; height: 640px; border: 1px solid #111; border-radius: 7px 7px 0 0; padding: 0 7px 7px; background: linear-gradient(#9db7d5, #bdd3ea 80px, #b9d1ea); box-shadow: inset -1px -1px #56cfe8, inset 1px 1px #dce9f6; }
.sub-title { height: 31px; display: flex; align-items: center; padding: 7px 0 0 3px; }
.sub-icon { width: 16px; height: 16px; margin-top: 1px; }
.sub-title span { margin: 5px 0 0 6px; flex: 1; letter-spacing: -.22px; }
.sub-btn { width: 32px; height: 18px; margin: -1px 2px 0 0; border: 1px solid #62788f; border-radius: 3px; background: linear-gradient(#c8daee 45%, #9db9d8 50%, #bdd3ea); display: grid; place-items: center; box-shadow: inset 0 0 0 1px #ffffff80; }
.sub-btn.red { border-color: #4d1613; background: linear-gradient(#e3a091 45%, #be402a 50%, #d4836c); margin-right: 3px; }
.red svg { width: 12px; height: 10px; }
.min-glyph { width: 10px; height: 5px; background: #fff; border: 1px solid #5b6878; margin-top: 3px; }
.form { position: relative; height: 600px; background: #efefef; }
.form-menu { height: 21px; background: #fff; }
.form-menu span { display: block; width: 68px; height: 21px; line-height: 23px; padding-left: 8px; background: linear-gradient(90deg, #fff, #ebebeb 80%, #f4f4f4); letter-spacing: -.5px; }
.central { padding: 10px 9px 0; background: radial-gradient(circle, #f3f3f3 .8px, transparent 1px) 0 0 / 10px 10px; }
.result { position: relative; height: 270px; border: 1px solid #ec8a8a; border-bottom: 1px solid #6fb574; display: grid; place-items: center; font-size: 52px; letter-spacing: -.6px; }
.result span { padding-right: 1px; }
.handle { position: absolute; width: 6px; height: 6px; background: #000080; }
.nw, .ne, .sw, .se { background: #a6a6ee; border: 1px solid #0000a8; }
.nw, .n, .ne { top: -3px; } .w, .e { top: 130px; } .sw, .s, .se { top: 263px; }
.nw, .w, .sw { left: -3px; } .n, .s { left: 387px; } .ne, .e, .se { right: -3px; }
.grid-row { margin-top: 3px; height: 266px; border: 2px solid #ec7b7b; border-top-width: 1px; display: flex; font-size: 39px; }
.cell { display: flex; align-items: center; }
.name-label { width: 189px; border-right: 1px solid #6fb574; letter-spacing: -.85px; }
.name-label span { padding-top: 2px; }
.name-edit { width: 472px; border-right: 1px solid #6fb574; padding-left: 3px; letter-spacing: -.28px; }
.line-edit { width: 466px; height: 59px; border: 1px solid #7a7a7a; background: #fff; color: #808080; line-height: 61px; padding-left: 2px; }
.send { padding-left: 4px; letter-spacing: -1px; }
.push { width: 112px; height: 59px; border: 1px solid #adadad; background: #e1e1e1; line-height: 61px; text-align: center; }
.size-grip { position: absolute; right: 2px; bottom: 2px; width: 9px; height: 9px; }
.right { width: 517px; margin-left: 5px; }
.right section { overflow: hidden; }
.inspector { padding-top: 2px; height: 278px; }
.right .dock-title { border-right: 0; }
.oi-filter { margin-top: 2px; border-right: 0; }
.right .oi-filter { line-height: 19px; }
.table { border: 1px solid #828790; border-right: 0; background: #fff; display: flex; }
.table-body { width: 499px; overflow: hidden; }
.oi-table { margin-top: 5px; height: 220px; }
.head { display: flex; height: 25px; line-height: 26px; }
.head .c1 { position: relative; padding-left: 4px; border-right: 1px solid #e2e2e2; }
.sort { position: absolute; left: 102px; top: 0; width: 8px; height: 5px; }
.c1, .c2 { display: flex; align-items: center; }
.oi-table .c1 { width: 213px; } .oi-table .c2 { flex: 1; padding-left: 3px; }
.head .c2 { border-right: 1px solid #e2e2e2; padding-left: 4px !important; flex: 1; }
.orow { display: flex; height: 18px; line-height: 18px; }
.orow.tall { height: 20px; line-height: 20px; }
.orow.alt { background: #f5f5f5; }
.chev { width: 11px; height: 11px; margin: 0 -1px; }
.d0 { padding-left: 5px; } .d1 { padding-left: 25px; } .d2 { padding-left: 45px; } .d3 { padding-left: 65px; } .d4 { padding-left: 103px; }
.d0 .oname { margin-left: 9px; }
.c1 .mini { margin-left: 9px; } .mini { width: 16px; height: 16px; margin-right: 6px; }
.orow:nth-last-child(-n+2) .d1 { padding-left: 43px; }
.selected .c2 { background: #cdcdcd; }
.selected .c1 { padding-left: 80px; } .selected .oname { flex: 1; background: #cdcdcd; padding-left: 3px; }
.props { height: 255px; }
.prop-tools { display: flex; height: 36px; align-items: center; padding-left: 2px; }
.prop-tools .field { width: 421px; color: #000; display: flex; align-items: center; justify-content: space-between; padding-right: 7px; margin-right: 4px; }
.field svg { width: 15px; height: 15px; }
.pt { width: 23px; height: 23px; }
.arrow { width: 0; height: 0; border: 3px solid transparent; border-top-color: #000; margin: 21px 0 0 -3px; }
.arrow + .pt { margin-left: 4px; margin-right: 8px; }
.prop-object { height: 20px; border: 1px solid #b9b9b9; border-right: 0; line-height: 17px; padding-left: 2px; letter-spacing: -.29px; }
.p-table { margin-top: 1px; height: 171px; overflow: hidden; }
.p-table .c1 { width: 150px; } .p-table .c2 { flex: 1; padding-left: 3px; }
.p-table .head { height: 24px; }
.prow { height: 20px; line-height: 20px; display: flex; background: #ffffdf; border-bottom: 1px solid #d4d4d0; }
.prow .c1 { border-right: 1px solid #d4d4d0; padding-left: 43px; }
.prow.group { background: #a0a0a0; color: #fff; padding-left: 4px; border-color: #a0a0a0; }
.group .chev { margin-top: 3px; } .group b, .font-row b { margin-left: 10px; }
.font-row .c1 { padding-left: 4px; }
.a { font-size: 16px; margin: -2px 10px 0 2px; }
.dark { background: #ffffbf; }
.current .c2 { background: #efefef; } .current .c1 { padding-left: 40px; font-weight: 700; } .current .c1 span { flex: 1; background: #efefef; padding-left: 3px; line-height: 19px; }
.box { width: 13px; height: 13px; background: #fff; border: 1px solid #333; }
.p-thumb { height: 78px; }
.resources { height: 230px; }
.res-tools { display: flex; align-items: center; height: 33px; padding-left: 5px; }
.res-tools svg { width: 22px; height: 22px; margin-right: 7px; }
.res-tools .field { margin-left: auto; width: 228px; margin-right: 1px; line-height: 22px; }
.res-panes { display: flex; gap: 5px; height: 149px; }
.pane { flex: 1; border: 1px solid #828790; border-right: 0; background: #fff; }
.pane.left { flex: none; width: 257px; border-right: 1px solid #828790; padding: 1px 0 0 23px; }
.tabs { display: flex; padding-left: 2px; line-height: 23px; text-align: center; }
.tabs span { height: 22px; border: 1px solid #d9d9d9; border-top: 0; }
.t1 { width: 113px; padding-right: 3px; letter-spacing: -.27px; } .t2 { width: 92px; letter-spacing: -.27px; } .tabs .t3 { width: 118px; height: 24px; line-height: 26px; background: #fff; letter-spacing: -.37px; }
.taskbar { height: 39px; background: #3b3128; display: flex; }
.slot { width: 48.950px; display: grid; place-items: center; position: relative; padding-top: 1px; }
.slot svg { width: 24px; height: 24px; }
.s-windows svg { width: 16px; height: 16px; }
.s-task svg { width: 18px; height: 18px; margin-right: 4px; }
.s-search svg { width: 22px; height: 22px; margin-right: 2px; }
.s-designer svg, .s-photos svg { margin-left: 2px; }
.running::after { content: ""; position: absolute; left: 4px; right: 4px; bottom: 0; height: 2px; background: #76a9dc; }
.active { background: #625a52; }
.clock { margin-left: auto; width: 70px; padding: 2px 0 0; color: #fff; display: flex; flex-direction: column; align-items: center; line-height: 18px; letter-spacing: -.6px; }
</style>
